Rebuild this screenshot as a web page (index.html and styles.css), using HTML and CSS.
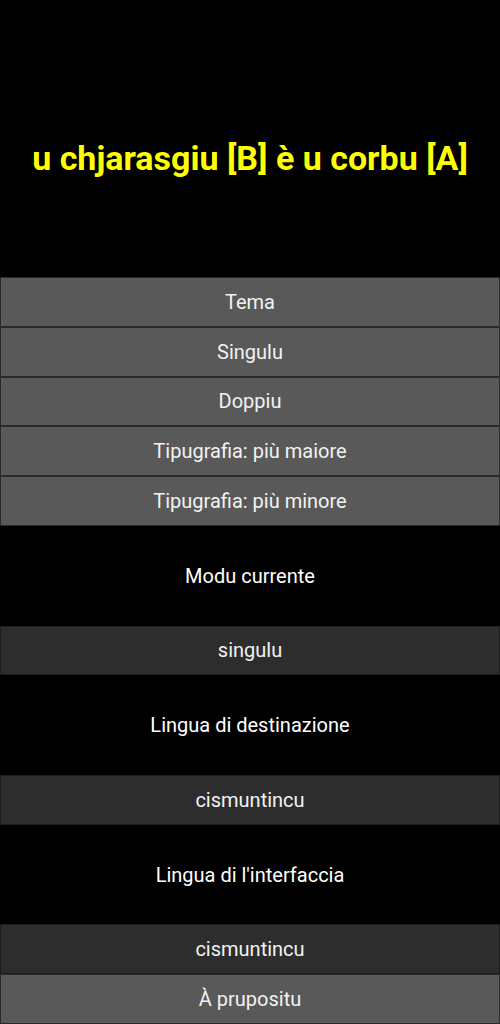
FILE: index.html
```html
<!DOCTYPE html>
<html>
<head>
<meta charset="utf-8">
<link rel="stylesheet" href="styles.css">
</head>
<body>
<div class="app">
  <header class="title-area">
    <h1 class="title">u chjarasgiu [B] è u corbu [A]</h1>
  </header>
  <div class="btn">Tema</div>
  <div class="btn">Singulu</div>
  <div class="btn">Doppiu</div>
  <div class="btn">Tipugrafia: più maiore</div>
  <div class="btn">Tipugrafia: più minore</div>
  <div class="label">Modu currente</div>
  <div class="btn dark">singulu</div>
  <div class="label">Lingua di destinazione</div>
  <div class="btn dark">cismuntincu</div>
  <div class="label">Lingua di l'interfaccia</div>
  <div class="btn dark">cismuntincu</div>
  <div class="btn">À prupositu</div>
</div>
</body>
</html>
```

FILE: styles.css
```css
html, body {
  margin: 0;
  padding: 0;
  background: #000;
}
.app {
  width: 500px;
  display: flex;
  flex-direction: column;
  font-family: Roboto, "Liberation Sans", sans-serif;
  color: #fff;
}
.title-area {
  height: 277px;
  display: flex;
  align-items: center;
  justify-content: center;
  padding-top: 38px;
  box-sizing: border-box;
}
.title {
  margin: 0;
  color: #ffff00;
  font-size: 34px;
  font-weight: 700;
}
.btn {
  height: 49.8px;
  flex-shrink: 0;
  box-sizing: border-box;
  border: 1px solid #2a2a2a;
  background: #595959;
  display: flex;
  align-items: center;
  justify-content: center;
  font-size: 20px;
  color: #f2f2f2;
}
.btn.dark {
  background: #2d2d2d;
  border-color: #1e1e1e;
}
.label {
  height: 99.6px;
  flex-shrink: 0;
  display: flex;
  align-items: center;
  justify-content: center;
  font-size: 20px;
}
```
